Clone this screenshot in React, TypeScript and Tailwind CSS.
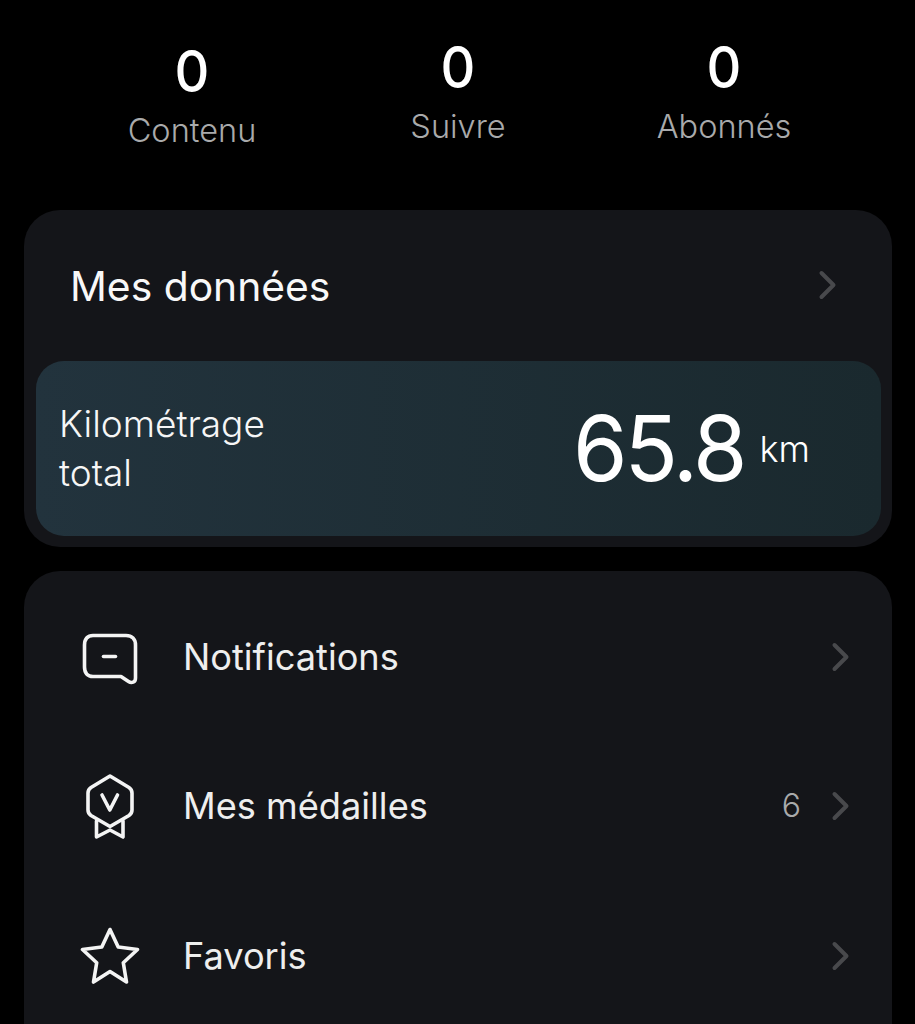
import React from "react";

function Chevron({ className }: { className?: string }) {
  return (
    <svg className={className} width="20" height="32" viewBox="0 0 20 32" fill="none">
      <path d="M3.5 4 L15.5 16 L3.5 28" stroke="#48494c" strokeWidth="4" strokeLinecap="round" strokeLinejoin="round" />
    </svg>
  );
}

function Stat({ label, className }: { label: string; className?: string }) {
  return (
    <div className={"flex w-[266px] flex-col items-center " + (className ?? "")}>
      <div className="h-[64px] origin-center scale-y-[1.08] text-[54px] leading-[64px] font-medium text-white">0</div>
      <div className="mt-[8px] h-[40px] text-[32.5px] leading-[40px] font-light text-[#a9aaab]">{label}</div>
    </div>
  );
}

function MessageIcon() {
  return (
    <svg className="translate-y-[2px]" width="60" height="52" viewBox="0 0 60 52" fill="none" stroke="#f4f4f4" strokeWidth="3.6" strokeLinecap="round" strokeLinejoin="round">
      <path d="M14 2.5 H47 C53 2.5 56.5 6 56.5 12 V45 C56.5 49.5 52.5 50.5 49.5 48.5 L42 43.5 H14 C8.5 43.5 5.5 40 5.5 34 V12 C5.5 6 8.5 2.5 14 2.5 Z" />
      <path d="M24.5 23.5 H36.5" />
    </svg>
  );
}

function MedalIcon() {
  return (
    <svg className="translate-y-[1px]" width="52" height="66" viewBox="0 0 52 66" fill="none" stroke="#f4f4f4" strokeWidth="3.6" strokeLinecap="round" strokeLinejoin="round">
      <path d="M27 2 L46 13.5 Q49 15.5 49 19 V36 Q49 39.5 46 41.5 L27 52.5 L8 41.5 Q5 39.5 5 36 V19 Q5 15.5 8 13.5 Z" />
      <path d="M19 21 L26.8 36 L34.5 21" />
      <path d="M13.5 47 V63 L27 56 L40 63 V47" />
    </svg>
  );
}

function StarIcon() {
  return (
    <svg className="translate-x-[1px]" width="60" height="58" viewBox="0 0 60 58" fill="none" stroke="#f4f4f4" strokeWidth="3.6" strokeLinecap="round" strokeLinejoin="round">
      <path d="M30 2.5 L38.2 20 L57.5 22.5 L43.3 35.8 L46.5 55 L30 44.5 L13.5 55 L16.7 35.8 L2.5 22.5 L21.8 20 Z" />
    </svg>
  );
}

function Row({ icon, label, badge }: { icon: React.ReactNode; label: string; badge?: string }) {
  return (
    <div className="flex h-[149.5px] items-center pl-[50px] pr-[41px]">
      <div className="flex w-[70px] justify-center">{icon}</div>
      <div className="ml-[39px] text-[36.2px] leading-[48px] font-normal text-[#eeeeee]">{label}</div>
      <div className="ml-auto flex items-center gap-[30px]">
        {badge && <span className="text-[32px] leading-[40px] font-light text-[#a9aaab]">{badge}</span>}
        <Chevron />
      </div>
    </div>
  );
}

export default function App() {
  return (
    <div className="h-[1024px] w-[915px] overflow-hidden bg-black font-['Inter',sans-serif]">
      <div className="flex h-[210px] justify-center pt-[35px] pl-[1px]">
        <Stat label="Contenu" className="pt-[4px]" />
        <Stat label="Suivre" />
        <Stat label="Abonnés" />
      </div>
      <div className="ml-[24px] w-[868px] rounded-[36px] bg-[#141519] pt-[53px] pb-[11px] pl-[12px] pr-[11px]">
        <div className="flex h-[48px] items-center justify-between pl-[34px] pr-[43px]">
          <div className="-translate-y-[1px] text-[40.8px] leading-[48px] font-normal text-[#f8f8f8]">Mes données</div>
          <Chevron className="-translate-y-[2px]" />
        </div>
        <div className="mt-[50px] flex h-[175px] items-center justify-between rounded-[28px] bg-gradient-to-r from-[#22333d] to-[#1a292e] pl-[23px] pr-[71px]">
          <div className="-translate-y-[1px] text-[37px] leading-[49px] font-light text-[#f6f6f6]">
            Kilométrage
            <br />
            total
          </div>
          <div className="flex items-baseline gap-[15px] text-white">
            <span className="origin-bottom scale-y-[1.03] text-[88px] leading-[96px] font-normal tracking-[-3px]">65.8</span>
            <span className="relative top-[-19px] text-[36px] leading-[40px] font-light">km</span>
          </div>
        </div>
      </div>
      <div className="ml-[24px] mt-[24px] h-[500px] w-[868px] rounded-[36px] bg-[#141519] pt-[11px]">
        <Row icon={<MessageIcon />} label="Notifications" />
        <Row icon={<MedalIcon />} label="Mes médailles" badge="6" />
        <Row icon={<StarIcon />} label="Favoris" />
      </div>
    </div>
  );
}
